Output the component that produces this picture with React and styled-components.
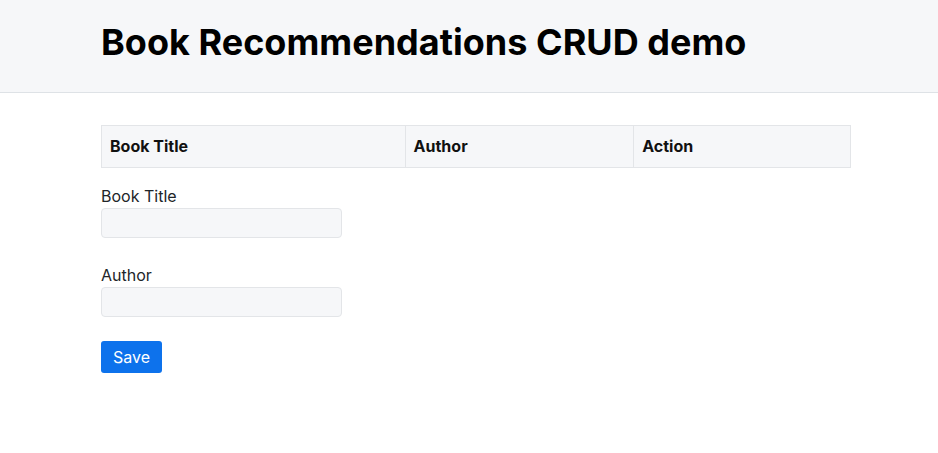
import React from "react";
import styled, { createGlobalStyle } from "styled-components";

const Global = createGlobalStyle`
  html, body { margin: 0; padding: 0; background: #fff; }
  body { font-family: Inter, "Noto Sans", sans-serif; color: #212529; }
  * { box-sizing: border-box; }
`;

const Header = styled.header`
  background: #f6f7f9;
  border-bottom: 1px solid #dee2e6;
  height: 93px;
  display: flex;
  align-items: center;
`;

const Container = styled.div`
  width: 750px;
  margin-left: 101px;
`;

const Title = styled.h1`
  margin: 0;
  font-size: 36px;
  font-weight: 700;
  color: #000;
  letter-spacing: 0.02px;
  line-height: 1;
  padding-bottom: 8px;
`;

const Main = styled.main`
  padding-top: 32px;
`;

const Table = styled.table`
  width: 750px;
  border-collapse: collapse;
  margin-bottom: 18px;
`;

const Th = styled.th`
  width: ${(p) => p.$w}px;
  background: #f6f7f9;
  border: 1px solid #e3e5e8;
  text-align: left;
  font-size: 16px;
  font-weight: 700;
  color: #111;
  padding: 0 8px 2px;
  height: 42px;
`;

const Field = styled.div`
  display: flex;
  flex-direction: column;
  margin-bottom: ${(p) => p.$mb}px;
`;

const Label = styled.label`
  font-size: 16px;
  line-height: 20px;
  color: #212529;
  margin-bottom: 2px;
`;

const Input = styled.input`
  width: 241px;
  height: 30px;
  background: #f6f7f9;
  border: 1px solid #e3e5e8;
  border-radius: 4px;
  outline: none;
  font-family: inherit;
`;

const Button = styled.button`
  background: #0d72ec;
  color: #fff;
  border: none;
  border-radius: 3px;
  font-family: inherit;
  font-size: 16px;
  height: 32px;
  padding: 0 12px;
`;

export default function App() {
  return (
    <>
      <Global />
      <Header>
        <Container>
          <Title>Book Recommendations CRUD demo</Title>
        </Container>
      </Header>
      <Container>
        <Main>
          <Table>
            <thead>
              <tr>
                <Th $w={304}>Book Title</Th>
                <Th $w={229}>Author</Th>
                <Th $w={217}>Action</Th>
              </tr>
            </thead>
          </Table>
          <Field $mb={27}>
            <Label>Book Title</Label>
            <Input />
          </Field>
          <Field $mb={24}>
            <Label>Author</Label>
            <Input />
          </Field>
          <Button>Save</Button>
        </Main>
      </Container>
    </>
  );
}
